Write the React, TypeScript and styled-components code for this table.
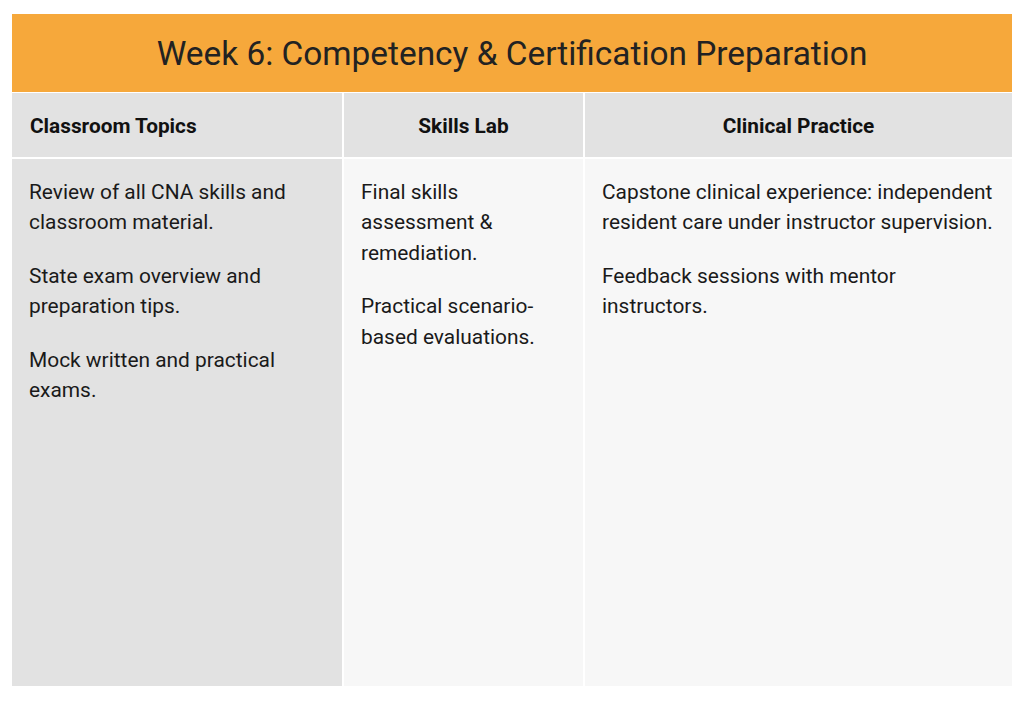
import styled, { createGlobalStyle } from "styled-components";

const GlobalStyle = createGlobalStyle`
  body {
    margin: 0;
    background: #ffffff;
    font-family: Roboto, "Liberation Sans", Arial, sans-serif;
  }
`;

interface Column {
  title: string;
  items: string[];
}

const columns: Column[] = [
  {
    title: "Classroom Topics",
    items: [
      "Review of all CNA skills and classroom material.",
      "State exam overview and preparation tips.",
      "Mock written and practical exams.",
    ],
  },
  {
    title: "Skills Lab",
    items: [
      "Final skills assessment & remediation.",
      "Practical scenario-based evaluations.",
    ],
  },
  {
    title: "Clinical Practice",
    items: [
      "Capstone clinical experience: independent resident care under instructor supervision.",
      "Feedback sessions with mentor instructors.",
    ],
  },
];

export default function App() {
  return (
    <>
      <GlobalStyle />
      <Page>
        <Title>Week 6: Competency &amp; Certification Preparation</Title>
        <Grid>
          {columns.map((col, idx) => (
            <HeadCell key={col.title} $left={idx === 0}>
              {col.title}
            </HeadCell>
          ))}
          {columns.map((col, idx) => (
            <BodyCell key={col.title} $shaded={idx === 0}>
              {col.items.map((item) => (
                <p key={item}>{item}</p>
              ))}
            </BodyCell>
          ))}
        </Grid>
      </Page>
    </>
  );
}

const Page = styled.div`
  width: 1000px;
  margin: 14px 12px 0;
`;

const Title = styled.h1`
  margin: 0;
  height: 78px;
  display: flex;
  align-items: center;
  justify-content: center;
  background-color: #f6a83b;
  color: #222222;
  font-size: 33.4px;
  font-weight: 400;
`;

const Grid = styled.div`
  display: grid;
  grid-template-columns: 330px 239px 1fr;
  grid-template-rows: 64px 527px;
  column-gap: 2px;
  row-gap: 2px;
  padding-top: 1px;
  background-color: #ffffff;
`;

const HeadCell = styled.div<{ $left: boolean }>`
  display: flex;
  align-items: center;
  justify-content: ${({ $left }) => ($left ? "flex-start" : "center")};
  padding: 1px 18px 0;
  background-color: #e2e2e2;
  color: #111111;
  font-size: 20.8px;
  font-weight: 700;
`;

const BodyCell = styled.div<{ $shaded: boolean }>`
  padding: 17.5px 17px;
  background-color: ${({ $shaded }) => ($shaded ? "#e2e2e2" : "#f7f7f7")};
  color: #1a1a1a;
  font-size: 20.9px;
  line-height: 30.5px;

  & > p {
    margin: 0 0 23px;
  }
`;
